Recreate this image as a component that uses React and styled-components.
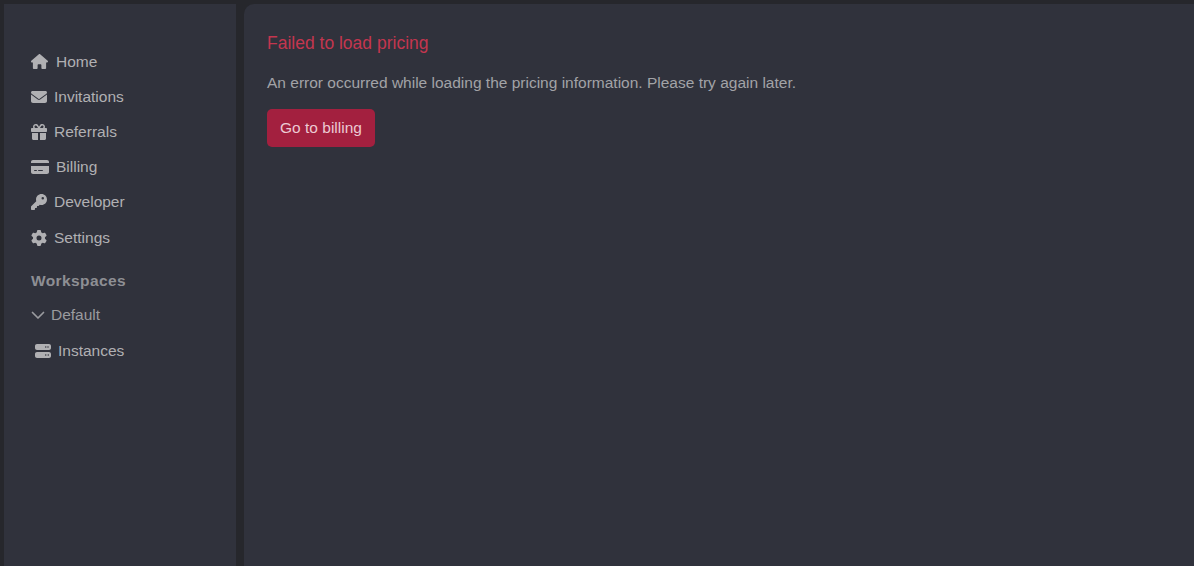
import React from 'react';
import styled, { createGlobalStyle } from 'styled-components';
import { FaHouse, FaEnvelope, FaGift, FaCreditCard, FaKey, FaGear, FaServer } from 'react-icons/fa6';

const GlobalStyle = createGlobalStyle`
  html, body {
    margin: 0;
    height: 100%;
    overflow: hidden;
    background: #26272c;
  }
  #root {
    height: 100%;
  }
`

const Page = styled.div`
  display: flex;
  gap: 8px;
  height: 100vh;
  box-sizing: border-box;
  padding: 4px 0 0 4px;
  font-family: "Liberation Sans", Arial, sans-serif;
  font-size: 15.5px;
`

const Sidebar = styled.nav`
  width: 232px;
  flex: none;
  box-sizing: border-box;
  padding: 40px 0 0 27px;
  background: #30323c;
`

const NavItem = styled.a`
  display: flex;
  align-items: center;
  gap: ${props => props.$gap}px;
  height: ${props => props.$height || 35}px;
  color: #b0b0b3;
  line-height: 18px;
`

const NavIcon = styled.span`
  display: flex;
  align-items: center;
  justify-content: flex-start;
  width: ${props => props.$width || 17}px;
  height: 18px;
  flex: none;
  font-size: ${props => props.$size || 16}px;
`

const Heading = styled.h4`
  margin: 16px 0 0;
  height: 26px;
  color: #8e8f94;
  font-size: 15.5px;
  font-weight: 700;
  letter-spacing: 0.4px;
  line-height: 20px;
`

const WorkspaceRow = styled.div`
  display: flex;
  align-items: center;
  gap: 5px;
  height: 35px;
  color: #9a9b9f;
  line-height: 18px;
`

const InstanceRow = styled(NavItem)`
  margin-top: 1px;
  padding-left: 4px;
`

const Main = styled.main`
  flex: 1;
  box-sizing: border-box;
  padding: 28px 23px;
  background: #30323c;
  border-top-left-radius: 10px;
`

const ErrorTitle = styled.h2`
  margin: 0;
  color: #c4364f;
  font-size: 17.5px;
  font-weight: 400;
  line-height: 22px;
`

const ErrorText = styled.p`
  margin: 19px 0 0;
  color: #a2a3a7;
  font-size: 15.5px;
  line-height: 20px;
`

const BillingButton = styled.button`
  display: block;
  margin-top: 16px;
  width: 108px;
  height: 38px;
  padding: 0;
  border: 0;
  border-radius: 5px;
  background: #a3203f;
  color: #eccad3;
  font-family: inherit;
  font-size: 15.5px;
`

const links = [
    { label: 'Home', icon: FaHouse, gap: 7, width: 18, size: 17, height: 35 },
    { label: 'Invitations', icon: FaEnvelope, gap: 6, height: 35 },
    { label: 'Referrals', icon: FaGift, gap: 7, width: 16, height: 35 },
    { label: 'Billing', icon: FaCreditCard, gap: 7, width: 18, size: 18, height: 35 },
    { label: 'Developer', icon: FaKey, gap: 7, width: 16, height: 36 },
    { label: 'Settings', icon: FaGear, gap: 7, width: 16, height: 35 },
]

const Chevron = () => (
    <svg width="14" height="14" viewBox="0 0 14 14" fill="none" stroke="currentColor" strokeWidth="1.7" strokeLinecap="round" strokeLinejoin="round">
        <path d="M1.5 4.5 7 10l5.5-5.5" />
    </svg>
)

const App = () => (
    <>
        <GlobalStyle />
        <Page>
            <Sidebar>
                {
                    links.map(({ label, icon: Icon, gap, width, size, height }) => (
                        <NavItem key={label} $gap={gap} $height={height}>
                            <NavIcon $width={width} $size={size}><Icon /></NavIcon>
                            {label}
                        </NavItem>
                    ))
                }
                <Heading>Workspaces</Heading>
                <WorkspaceRow>
                    <NavIcon $width={15}><Chevron /></NavIcon>
                    Default
                </WorkspaceRow>
                <InstanceRow $gap={7}>
                    <NavIcon $width={16}><FaServer /></NavIcon>
                    Instances
                </InstanceRow>
            </Sidebar>
            <Main>
                <ErrorTitle>Failed to load pricing</ErrorTitle>
                <ErrorText>An error occurred while loading the pricing information. Please try again later.</ErrorText>
                <BillingButton>Go to billing</BillingButton>
            </Main>
        </Page>
    </>
)

export default App;
